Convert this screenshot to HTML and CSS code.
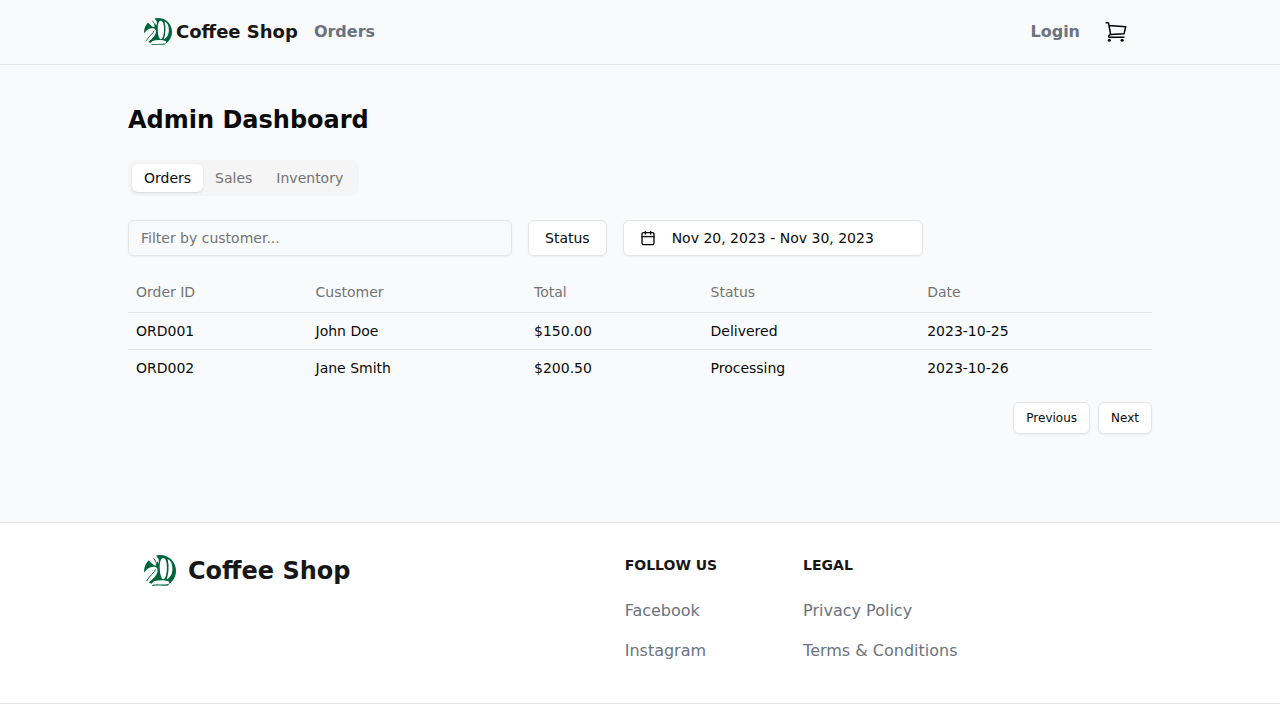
FILE: index.html
```html
<!DOCTYPE html>
<html lang="en">
<head>
<meta charset="utf-8">
<title>Coffee Shop</title>
<link rel="stylesheet" href="styles.css">
</head>
<body>
<svg class="defs" aria-hidden="true">
  <symbol id="logo" viewBox="0 0 32 32">
    <g fill="#00653b">
      <path d="M12 .6C13.300.2 14.600 0 16 0c9 0 16 7 16 15.800 0 5.400-2.400 10.200-6.600 13.100L24.600 26.800C20 25 13 25 9.500 26.500L7.500 28.700 4.500 27.200C9 24 11.500 21 13.300 16.500L12.500 12.500 15 9 14.600 4Z"/>
      <path d="M0 15.500C.3 11.500 2 8 4.600 5.200L7 7.800 10.300 10.300 12 10.700 13.500 6 15 9 14.300 13.300 12 12.300C7.500 10.800 3.500 13 .3 17.500Z"/>
      <path d="M8 30.200C11 28.900 20 30.200 25.300 28.800L24 30.400C19 31 13 30.200 8.800 31Z"/>
    </g>
    <g fill="#fff">
      <path d="M15.800 14.500C15.400 8.500 16.500 3 19.200 3c3 0 4.100 6.200 3.600 12.200-.4 5.200-1.700 9-3.500 9-1.900 0-3.200-4.500-3.500-9.700Z"/>
      <path d="M23.500 4c3.600 1.500 5.200 5.800 4.900 10.600-.2 5-2.500 8.500-5.800 9.800 2.400-6.500 2.500-14.500.9-20.400Z"/>
      <path d="M13.200 13.300c1.300 3.900-1.300 8.100-5.200 11.200L4 27.900C-.8 22.500 5 14.500 13.200 13.300Z"/>
      <path d="M9 27.500c2.500-2.500 13-2.800 16.300-.8.300 2-4.200 2.600-9 2.300-3-.2-5.900-.5-7.300-1.500Z"/>
    </g>
    <path fill="none" stroke="#00653b" stroke-width="1" d="M11.500 14.300C10.500 18 5.500 20.500 2.700 26M9.600 3.200C11.500 5.500 12.600 8 12.900 11.500"/>
  </symbol>
</svg>
<header class="topbar">
  <div class="container nav">
    <a class="brand"><svg class="brand-logo"><use href="#logo"/></svg>Coffee Shop</a>
    <a class="nav-link">Orders</a>
    <a class="nav-link login">Login</a>
    <svg class="cart" viewBox="0 0 24 24" fill="none" stroke="#000" stroke-width="1.500" stroke-linecap="butt" stroke-linejoin="round">
      <path d="M1.700 2.750H3.800Q4.500 2.750 4.650 3.500L6.600 14.400M5.100 5.500 21.700 6.700 20.100 13.700 6.600 14.400 4.900 15.600Q4.200 17.250 5.500 17.250H20.500"/>
      <circle cx="5.300" cy="20.300" r="1.550" fill="#000" stroke="none"/><circle cx="18.100" cy="20.300" r="1.550" fill="#000" stroke="none"/>
    </svg>
  </div>
</header>
<main class="container main">
  <h1>Admin Dashboard</h1>
  <div class="tabs"><button class="tab active">Orders</button><button class="tab">Sales</button><button class="tab">Inventory</button></div>
  <div class="filters">
    <input class="search" type="text" placeholder="Filter by customer...">
    <button class="btn status">Status</button>
    <button class="btn dates">
      <svg class="calendar" viewBox="0 0 24 24" fill="none" stroke="currentColor" stroke-width="2" stroke-linecap="round" stroke-linejoin="round"><path d="M8 2v4M16 2v4M3 10h18"/><rect x="3" y="4" width="18" height="18" rx="2"/></svg>
      Nov 20, 2023 - Nov 30, 2023
    </button>
  </div>
  <table>
    <colgroup><col class="col-id"><col class="col-customer"><col class="col-total"><col class="col-status"><col></colgroup>
    <thead><tr><th>Order ID</th><th>Customer</th><th>Total</th><th>Status</th><th>Date</th></tr></thead>
    <tbody>
      <tr><td>ORD001</td><td>John Doe</td><td>$150.00</td><td>Delivered</td><td>2023-10-25</td></tr>
      <tr><td>ORD002</td><td>Jane Smith</td><td>$200.50</td><td>Processing</td><td>2023-10-26</td></tr>
    </tbody>
  </table>
  <div class="pager"><button class="btn small">Previous</button><button class="btn small">Next</button></div>
</main>
<footer class="footer">
  <div class="container footer-inner">
    <a class="footer-brand"><svg class="footer-logo"><use href="#logo"/></svg>Coffee Shop</a>
    <div class="links follow"><h2>Follow us</h2><a>Facebook</a><a>Instagram</a></div>
    <div class="links"><h2>Legal</h2><a>Privacy Policy</a><a>Terms &amp; Conditions</a></div>
  </div>
  <div class="footer-end"></div>
</footer>
</body>
</html>
```
FILE: styles.css
```css
* { box-sizing: border-box; }
body { margin: 0; height: 720px; overflow: hidden; background: #f9fafc; color: #0a0a0a; font: 14px/20px "DejaVu Sans", sans-serif; }
.defs { display: none; }
button, input { font: inherit; color: inherit; }
.container { width: 1024px; margin: 0 auto; }
.topbar { height: 65px; border-bottom: 1px solid #e5e5e5; }
.nav { height: 64px; padding: 0 24px 0 16px; display: flex; align-items: center; }
.brand { display: flex; align-items: center; gap: 4px; color: #171717; font-size: 18px; line-height: 28px; font-weight: 700; }
.brand-logo { width: 28px; height: 28px; }
.nav-link { margin-left: 16px; color: #6b7280; font-size: 16px; line-height: 24px; font-weight: 700; }
.login { margin-left: auto; }
.cart { width: 24px; height: 24px; margin-left: 24px; }
.main { height: 457px; padding-top: 39px; }
h1 { margin: 0 0 24px; font-size: 24px; line-height: 32px; font-weight: 700; }
.tabs { display: inline-flex; width: 231px; height: 36px; padding: 4px; border-radius: 8px; background: #f5f5f5; vertical-align: top; }
.tab { height: 28px; padding: 0 12px; border: 0; border-radius: 6px; background: none; color: #737373; }
.tab.active { background: #fff; color: #0a0a0a; box-shadow: 0 1px 3px rgba(0,0,0,.1), 0 1px 2px -1px rgba(0,0,0,.1); }
.filters { display: flex; gap: 16px; margin: 24px 0 16px; }
.search { width: 384px; height: 36px; padding: 0 12px; border: 1px solid #e5e5e5; border-radius: 6px; background: transparent; box-shadow: 0 1px 2px rgba(0,0,0,.05); }
.search::placeholder { color: #737373; opacity: 1; }
.btn { height: 36px; padding: 0 16px; border: 1px solid #e5e5e5; border-radius: 6px; background: #fff; box-shadow: 0 1px 2px rgba(0,0,0,.05); }
.dates { width: 300px; display: flex; align-items: center; gap: 16px; }
.calendar { width: 16px; height: 16px; }
table { width: 100%; table-layout: fixed; border-collapse: separate; border-spacing: 0; }
.col-id { width: 179.500px; }
.col-customer { width: 218.500px; }
.col-total { width: 176.500px; }
.col-status { width: 216.700px; }
th { height: 41px; padding: 0 8px; border-bottom: 1px solid #e5e5e5; color: #737373; font-weight: 400; text-align: left; }
td { height: 36px; padding: 8px; }
tbody tr:first-child td { height: 37px; border-bottom: 1px solid #e5e5e5; }
.pager { display: flex; justify-content: flex-end; gap: 8px; margin-top: 16px; }
.small { height: 32px; padding: 0 12px; font-size: 12px; line-height: 16px; }
.footer { height: 198px; border-top: 1px solid #e5e5e5; background: #fff; color: #171717; }
.footer-inner { height: 180px; padding: 32px 16px 0; display: flex; align-items: flex-start; }
.footer-brand { width: 480.700px; display: flex; align-items: center; gap: 12px; font-size: 24px; line-height: 32px; font-weight: 700; }
.footer-logo { width: 32px; height: 32px; }
.links { display: flex; flex-direction: column; gap: 16px; color: #6b7280; font-size: 16px; line-height: 24px; }
.follow { width: 178.400px; }
h2 { margin: 0 0 8px; color: #171717; font-size: 14px; line-height: 20px; font-weight: 700; text-transform: uppercase; }
.footer-end { height: 17px; border-top: 1px solid #e5e5e5; }
```
